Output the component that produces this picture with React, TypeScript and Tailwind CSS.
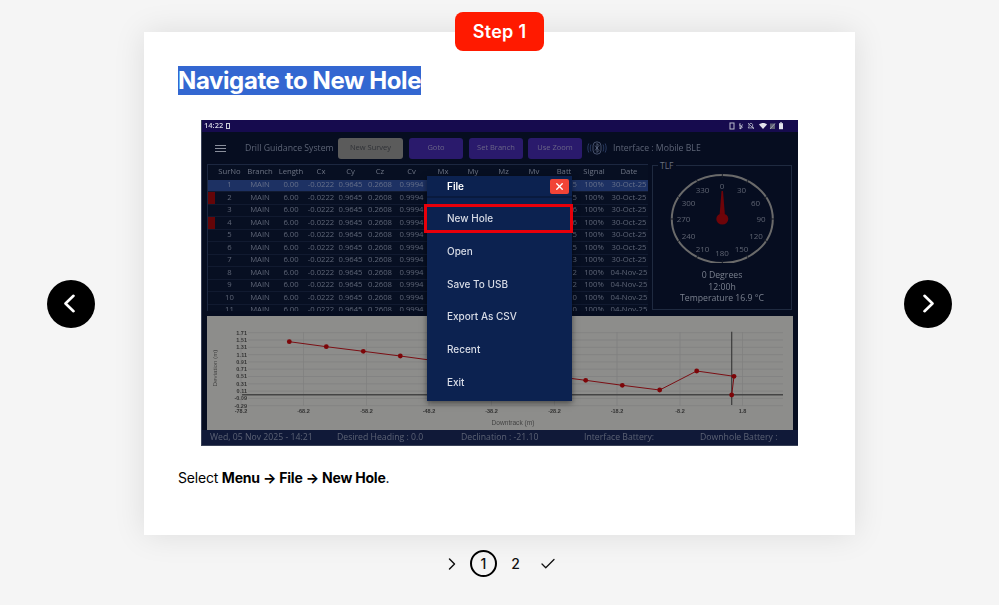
import { Check, ChevronRight, X } from "lucide-react";

const cols = "grid-cols-[7px_29px_32px_30px_30px_29px_30px_33px_30px_30px_31px_30px_30px_30px_40px]";
const heads = ["", "SurNo", "Branch", "Length", "Cx", "Cy", "Cz", "Cv", "Mx", "My", "Mz", "Mv", "Batt", "Signal", "Date"];
const rows = [
  { n: 1, len: "0.00", date: "30-Oct-25", b: "5" },
  { n: 2, len: "6.00", date: "30-Oct-25", b: "5", mark: true },
  { n: 3, len: "6.00", date: "30-Oct-25", b: "6" },
  { n: 4, len: "6.00", date: "30-Oct-25", b: "6", mark: true },
  { n: 5, len: "6.00", date: "30-Oct-25", b: "5" },
  { n: 6, len: "6.00", date: "30-Oct-25", b: "5" },
  { n: 7, len: "6.00", date: "30-Oct-25", b: "3" },
  { n: 8, len: "6.00", date: "04-Nov-25", b: "2" },
  { n: 9, len: "6.00", date: "04-Nov-25", b: "2" },
  { n: 10, len: "6.00", date: "04-Nov-25", b: "0" },
  { n: 11, len: "6.00", date: "04-Nov-25", b: "0" },
];

function Table() {
  return (
    <div className="w-[441px] h-[147px] overflow-hidden border-t border-l border-[#1c2740] bg-[#070f22] text-[7.700px] leading-none text-[#5f6677]">
      <div className={`grid ${cols} h-[14.500px] items-center text-center text-[#6d7484]`}>
        {heads.map((h, i) => (
          <span key={i}>{h}</span>
        ))}
      </div>
      {rows.map((r) => (
        <div
          key={r.n}
          className={`grid ${cols} h-[12.500px] items-center text-center border-b border-[#111a30] ${r.n === 1 ? "bg-[#1d3163] text-[#66708a]" : ""}`}
        >
          <span className={`h-full ${r.mark ? "bg-[#640508]" : ""}`} />
          <span>{r.n}</span>
          <span>MAIN</span>
          <span>{r.len}</span>
          <span>-0.0222</span>
          <span>0.9645</span>
          <span>0.2608</span>
          <span>0.9994</span>
          <span />
          <span />
          <span />
          <span />
          <span className="text-right pr-[2px]">{r.b}</span>
          <span>100%</span>
          <span>{r.date}</span>
        </div>
      ))}
    </div>
  );
}

const dial = [
  ["0", 722, 185.5], ["30", 741.5, 189.5], ["60", 755.5, 202.5], ["90", 761, 219], ["120", 756, 236],
  ["150", 741.5, 248.5], ["180", 722, 253], ["210", 702.5, 248.5], ["240", 688.5, 236], ["270", 683.5, 219],
  ["300", 688.5, 202.5], ["330", 702.5, 189.5],
] as const;

function Gauge() {
  const cx = 722.3;
  const cy = 219;
  return (
    <div className="relative w-[140px] h-[145px] mt-[1px] border border-[#1f2a40]">
      <span className="absolute left-[5px] -top-[6px] bg-[#060d20] px-[2px] text-[8.500px] leading-[11px] text-[#686f7e]">TLF</span>
      <svg viewBox="653 166 138 97" className="w-[138px] h-[97px] block" fill="none">
        <ellipse cx={cx} cy={cy} rx={50.5} ry={44} stroke="#6a6a6a" strokeWidth="2" />
        {Array.from({ length: 12 }).map((_, i) => {
          const a = (i * Math.PI) / 6;
          const s = Math.sin(a);
          const c = Math.cos(a);
          return (
            <line
              key={i}
              x1={cx + 47.5 * s}
              y1={cy - 41 * c}
              x2={cx + 52 * s}
              y2={cy - 45.5 * c}
              stroke="#161b26"
              strokeWidth="1"
            />
          );
        })}
        {dial.map(([t, x, y]) => (
          <text key={t} x={x} y={y + 3} textAnchor="middle" fontSize="8" fill="#5f6472" fontFamily="'Open Sans', sans-serif">
            {t}
          </text>
        ))}
        <polygon points="721.5,191 723,191 725,216 719.5,216" fill="#6e0409" />
        <ellipse cx={cx} cy={cy} rx={6} ry={5.5} fill="#6e0409" />
      </svg>
      <div className="mt-[7px] flex flex-col items-center text-[8.700px] leading-[11.600px] text-[#7a808e]">
        <span>0 Degrees</span>
        <span>12:00h</span>
        <span>Temperature 16.9 °C</span>
      </div>
    </div>
  );
}

const yLabels = ["1.71", "1.51", "1.31", "1.11", "0.91", "0.71", "0.51", "0.31", "0.11", "-0.09", "-0.29"];
const xTicks = [
  ["-78.2", 241], ["-68.2", 303.5], ["-58.2", 366.5], ["-48.2", 429], ["-38.2", 491.5],
  ["-28.2", 554.5], ["-18.2", 617], ["-8.2", 680], ["1.8", 742.5],
] as const;
const pts = [
  [289.3, 341.7], [326.3, 346.7], [363.3, 351.3], [400.3, 356], [437, 361], [474, 366], [511, 371], [548, 375.5],
  [585.7, 380.3], [622.3, 385.3], [659.7, 390], [696.7, 371], [734, 376.3], [731.7, 395],
];

function Chart() {
  return (
    <svg viewBox="207 316 586 114" className="block w-[586px] h-[114px] bg-[#8d8d8b]" fill="none">
      {yLabels.map((t, i) => {
        const y = 332.7 + i * 7.3;
        return (
          <g key={t}>
            <line x1="248" x2="783" y1={y} y2={y} stroke="#80807f" strokeWidth="0.7" />
            <text x="247" y={y + 1.9} textAnchor="end" fontSize="5.500" fontWeight="700" fill="#333333" fontFamily="'Liberation Sans', sans-serif">
              {t}
            </text>
          </g>
        );
      })}
      {xTicks.map(([t, x]) => (
        <g key={t}>
          <line x1={x} x2={x} y1="332" y2="406" stroke="#7f7f7e" strokeWidth="0.7" />
          <text x={x} y="413" textAnchor="middle" fontSize="5.500" fontWeight="700" fill="#333333" fontFamily="'Liberation Sans', sans-serif">
            {t}
          </text>
        </g>
      ))}
      <line x1="242" x2="783" y1="394.7" y2="394.7" stroke="#444444" strokeWidth="1.4" />
      <line x1="731.7" x2="731.7" y1="331.7" y2="405" stroke="#3b3b3b" strokeWidth="1.2" />
      <polyline points={pts.map((p) => p.join(",")).join(" ")} stroke="#7b0f14" strokeWidth="1" />
      {pts.map(([x, y], i) => (
        <circle key={i} cx={x} cy={y} r="2.400" fill="#7d0508" />
      ))}
      <text x="513" y="425" textAnchor="middle" fontSize="6.600" fill="#444444" fontFamily="'Liberation Sans', sans-serif">
        Downtrack (m)
      </text>
      <text
        transform="translate(217 368) rotate(-90)"
        textAnchor="middle"
        fontSize="6.200"
        fill="#444444"
        fontFamily="'Liberation Sans', sans-serif"
      >
        Deviation (m)
      </text>
    </svg>
  );
}

function StatusIcons() {
  return (
    <svg width="60" height="8" viewBox="0 0 60 8" fill="none" className="block">
      <rect x="1" y="1" width="4" height="6" stroke="#b9bccb" strokeWidth="1" />
      <path d="M11 1v6l2.500-1.800-3.500-2.600M11 7l2.500-4.600" stroke="#c6c9d6" strokeWidth="0.8" />
      <path d="M20 2.500c1-1.600 3-1.600 3.600 0v2.400l1 1h-5.600l1-1zM19 1l6 6" stroke="#b9bccb" strokeWidth="0.8" />
      <path d="M30 2.500 C32.500 .5 36 .5 38 2.500 L34 7Z" fill="#e3e4ec" />
      <path d="M41 7V1.500h5V7z" fill="#5d6073" />
      <path d="M41 7l5-5.500" stroke="#b9bccb" strokeWidth="0.7" />
      <rect x="50" y="1.200" width="4" height="6" fill="#e3e4ec" />
      <rect x="51" y="0.400" width="2" height="1" fill="#e3e4ec" />
    </svg>
  );
}

function Screenshot() {
  const menu = ["New Hole", "Open", "Save To USB", "Export As CSV", "Recent", "Exit"];
  return (
    <div className="relative w-[597px] h-[326px] mx-auto overflow-hidden bg-[#060d20] border-l border-b border-[#3a4258] font-['Open_Sans',sans-serif]">
      <div className="blur-[0.35px]">
        <div className="h-[12px] bg-[#160b4e] flex items-center justify-between pl-[2px] pr-[9px]">
          <div className="flex items-center gap-[3px] text-[7.500px] leading-none font-semibold text-[#d5d6e2]">
            <span>14:22</span>
            <span className="block w-[4px] h-[6px] border border-[#c9cbd8]" />
          </div>
          <StatusIcons />
        </div>

        <div className="h-[32px] flex items-center pl-[13px] text-[8.700px] leading-none text-[#5d6476] whitespace-nowrap">
          <div className="flex flex-col gap-[2px] w-[11px]">
            <span className="h-[1px] bg-[#8a8f9c]" />
            <span className="h-[1px] bg-[#8a8f9c]" />
            <span className="h-[1px] bg-[#8a8f9c]" />
          </div>
          <span className="ml-[19px] w-[93px]">Drill Guidance System</span>
          <div className="flex h-[21px] w-[65px] items-center justify-center rounded-[3px] bg-[#5b5b5b] text-[7.500px] text-[#2f3136]">New Survey</div>
          <div className="ml-[6px] flex h-[21px] w-[54px] items-center justify-center rounded-[3px] bg-[#2a1a6c] text-[7.500px] text-[#6a6587]">Goto</div>
          <div className="ml-[6px] flex h-[21px] w-[54px] items-center justify-center rounded-[3px] bg-[#2a1a6c] text-[7.500px] text-[#6a6587]">Set Branch</div>
          <div className="ml-[5px] flex h-[21px] w-[54px] items-center justify-center rounded-[3px] bg-[#2a1a6c] text-[7.500px] text-[#6a6587]">Use Zoom</div>
          <svg width="20" height="14" viewBox="0 0 20 14" fill="none" className="ml-[5px]">
            <rect x="6" y="0.800" width="8" height="12.400" rx="4" stroke="#56627f" strokeWidth="0.8" />
            <path d="M8 4.500l4 5-2 2V2.500l2 2-4 5" stroke="#6a7591" strokeWidth="0.7" />
            <path d="M4 3.500c-1 2-1 5 0 7M1.800 2.500c-1.300 3-1.300 6 0 9M16 3.500c1 2 1 5 0 7M18.200 2.500c1.300 3 1.300 6 0 9" stroke="#2e4068" strokeWidth="0.9" />
          </svg>
          <span className="ml-[6px]">Interface : Mobile BLE</span>
        </div>

        <div className="flex pl-[5px] gap-[4px] h-[148px]">
          <Table />
          <Gauge />
        </div>

        <div className="ml-[5px] mt-[4px] w-[586px]">
          <Chart />
        </div>

        <div className="h-[15px] bg-[#101938] flex items-center text-[8.700px] leading-none text-[#5c6274] whitespace-nowrap">
          <span className="ml-[8px] w-[127px]">Wed, 05 Nov 2025 - 14:21</span>
          <span className="w-[124px]">Desired Heading : 0.0</span>
          <span className="w-[123px]">Declination : -21.10</span>
          <span className="w-[116px]">Interface Battery:</span>
          <span>Downhole Battery :</span>
        </div>
      </div>

      <div className="absolute left-[225px] top-[56px] w-[145px] h-[225px] bg-[#0c2250] shadow-[0_2px_6px_rgba(0,0,0,0.5)] font-['Inter',sans-serif] text-[10px] font-medium leading-none text-[#d8dce6] blur-[0.25px]">
        <div className="relative h-[20px] flex items-center pl-[20px] border-b-[2px] border-[#091a3e] box-content font-semibold text-white">
          <span>File</span>
          <span className="absolute right-[3px] top-[3px] flex h-[15px] w-[19px] items-center justify-center rounded-[2px] bg-[#f24437] text-white">
            <X size={11} strokeWidth={3} />
          </span>
        </div>
        <div className="flex flex-col pt-[4px]">
          {menu.map((m, i) => (
            <div key={m} className="relative h-[32.700px] flex items-center pl-[20px]">
              {i === 0 && <span className="absolute -left-[3px] -right-[1px] top-[1.500px] bottom-[1.500px] border-[3px] border-[#e8000a]" />}
              <span>{m}</span>
            </div>
          ))}
        </div>
      </div>
    </div>
  );
}

function RoundButton({ right }: { right?: boolean }) {
  return (
    <div className="mt-10 flex h-12 w-12 shrink-0 items-center justify-center rounded-full bg-black text-white">
      <svg width="11" height="19" viewBox="0 0 11 19" fill="none" stroke="currentColor" strokeWidth="2.6" strokeLinecap="round" strokeLinejoin="round" className={right ? "ml-[1px]" : "-ml-[4px]"}>
        <path d={right ? "M1.500 1.800 9.500 9.500 1.500 17.200" : "M9.500 1.800 1.500 9.500 9.500 17.200"} />
      </svg>
    </div>
  );
}

export default function App() {
  return (
    <div className="h-[605px] w-full overflow-hidden bg-[#f5f5f5] pt-8 font-['Inter',sans-serif] text-black">
      <div className="flex items-center justify-center gap-[49px]">
        <RoundButton />
        <div className="relative w-[711px] h-[503px] shrink-0 bg-white px-[34px] pt-[34px] shadow-[0_0_30px_rgba(0,0,0,0.1)]">
          <div className="absolute left-[311px] -top-5 flex h-[39px] w-[89px] items-center justify-center rounded-lg bg-[#ff1a00] text-[18px] font-semibold leading-none tracking-[0.3px] text-white">
            Step 1
          </div>
          <h1 className="text-[24px] font-bold leading-[30px] tracking-[-0.4px] text-white">
            <span className="bg-[#3367d1]">Navigate to New Hole</span>
          </h1>
          <div className="mt-6">
            <Screenshot />
          </div>
          <p className="mt-[22px] text-[14px] leading-[20px] tracking-[-0.2px]">
            Select <strong>Menu → File → New Hole</strong>.
          </p>
        </div>
        <RoundButton right />
      </div>
      <div className="mt-[15px] flex items-center justify-center gap-[5px] text-[14px] font-medium text-[#111]">
        <span className="flex h-[27px] w-[27px] items-center justify-center">
          <ChevronRight size={20} strokeWidth={1.75} />
        </span>
        <span className="flex h-[27px] w-[27px] items-center justify-center rounded-full border-2 border-black">1</span>
        <span className="flex h-[27px] w-[27px] items-center justify-center">2</span>
        <span className="flex h-[27px] w-[27px] items-center justify-center">
          <Check size={18} strokeWidth={1.75} />
        </span>
      </div>
    </div>
  );
}
